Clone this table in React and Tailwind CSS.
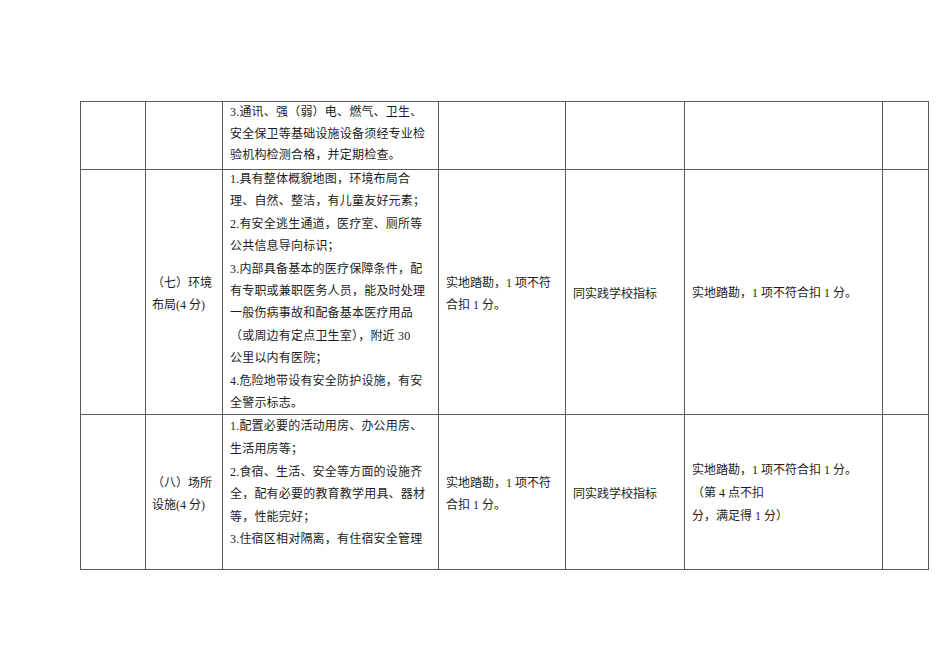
const rows = [
  {
    h: 'h-[68px]',
    name: null,
    lh: 'leading-[21.6px]',
    shift: 'mt-0',
    items: [
      '3.通讯、强（弱）电、燃气、卫生、',
      '安全保卫等基础设施设备须经专业检',
      '验机构检测合格，并定期检查。',
    ],
    method: null,
    ref: null,
    score: null,
  },
  {
    h: 'h-[245px]',
    name: ['（七）环境', '布局(4 分)'],
    lh: 'leading-[22.4px]',
    shift: '-mt-[2px]',
    items: [
      '1.具有整体概貌地图，环境布局合',
      '理、自然、整洁，有儿童友好元素；',
      '2.有安全逃生通道，医疗室、厕所等',
      '公共信息导向标识；',
      '3.内部具备基本的医疗保障条件，配',
      '有专职或兼职医务人员，能及时处理',
      '一般伤病事故和配备基本医疗用品',
      '（或周边有定点卫生室），附近 30',
      '公里以内有医院；',
      '4.危险地带设有安全防护设施，有安',
      '全警示标志。',
    ],
    method: ['实地踏勘，1 项不符', '合扣 1 分。'],
    ref: '同实践学校指标',
    score: ['实地踏勘，1 项不符合扣 1 分。'],
  },
  {
    h: 'h-[155px]',
    name: ['（八）场所', '设施(4 分)'],
    lh: 'leading-[22.6px]',
    shift: 'mt-0',
    items: [
      '1.配置必要的活动用房、办公用房、',
      '生活用房等；',
      '2.食宿、生活、安全等方面的设施齐',
      '全，配有必要的教育教学用具、器材',
      '等，性能完好；',
      '3.住宿区相对隔离，有住宿安全管理',
    ],
    method: ['实地踏勘，1 项不符', '合扣 1 分。'],
    ref: '同实践学校指标',
    score: ['实地踏勘，1 项不符合扣 1 分。', '（第 4 点不扣', '分，满足得 1 分）'],
  },
]

const cell = 'border border-[#5a5a5a] p-0'

export default function App() {
  return (
    <div className="w-[950px] h-[672px] bg-white pt-[101px] pl-[80px] text-[12px] text-[#1c1c1c] font-['Liberation_Serif','Noto_Sans_CJK_SC',serif]">
      <table className="table-fixed border-collapse w-[848px] border-t border-t-[#a3a3a3]">
        <colgroup>
          <col className="w-[65px]" />
          <col className="w-[77px]" />
          <col className="w-[216px]" />
          <col className="w-[127px]" />
          <col className="w-[119px]" />
          <col className="w-[198px]" />
          <col className="w-[46px]" />
        </colgroup>
        <tbody>
          {rows.map((r, i) => (
            <tr key={i} className={r.h}>
              <td className={cell}></td>
              <td className={`${cell} align-middle pl-[6px] leading-[22px] pt-[4px]`}>
                {r.name && r.name.map((t) => <div key={t} className="whitespace-nowrap">{t}</div>)}
              </td>
              <td className={`${cell} align-top pl-[7px]`}>
                <div className={`${r.shift} ${r.lh}`}>
                  {r.items.map((t) => (
                    <div key={t} className="whitespace-nowrap tracking-[0.2px]">{t}</div>
                  ))}
                </div>
              </td>
              <td className={`${cell} align-middle pl-[7px] leading-[22px] pt-[4px]`}>
                {r.method && r.method.map((t) => <div key={t} className="whitespace-nowrap">{t}</div>)}
              </td>
              <td className={`${cell} border-l-[#a8a8a8] align-middle pl-[7px] pt-[4px]`}>
                {r.ref && <div className="whitespace-nowrap">{r.ref}</div>}
              </td>
              <td className={`${cell} align-middle pl-[7px] leading-[23px] pt-[2px]`}>
                {r.score && r.score.map((t) => <div key={t} className="whitespace-nowrap">{t}</div>)}
              </td>
              <td className={cell}></td>
            </tr>
          ))}
        </tbody>
      </table>
    </div>
  )
}
